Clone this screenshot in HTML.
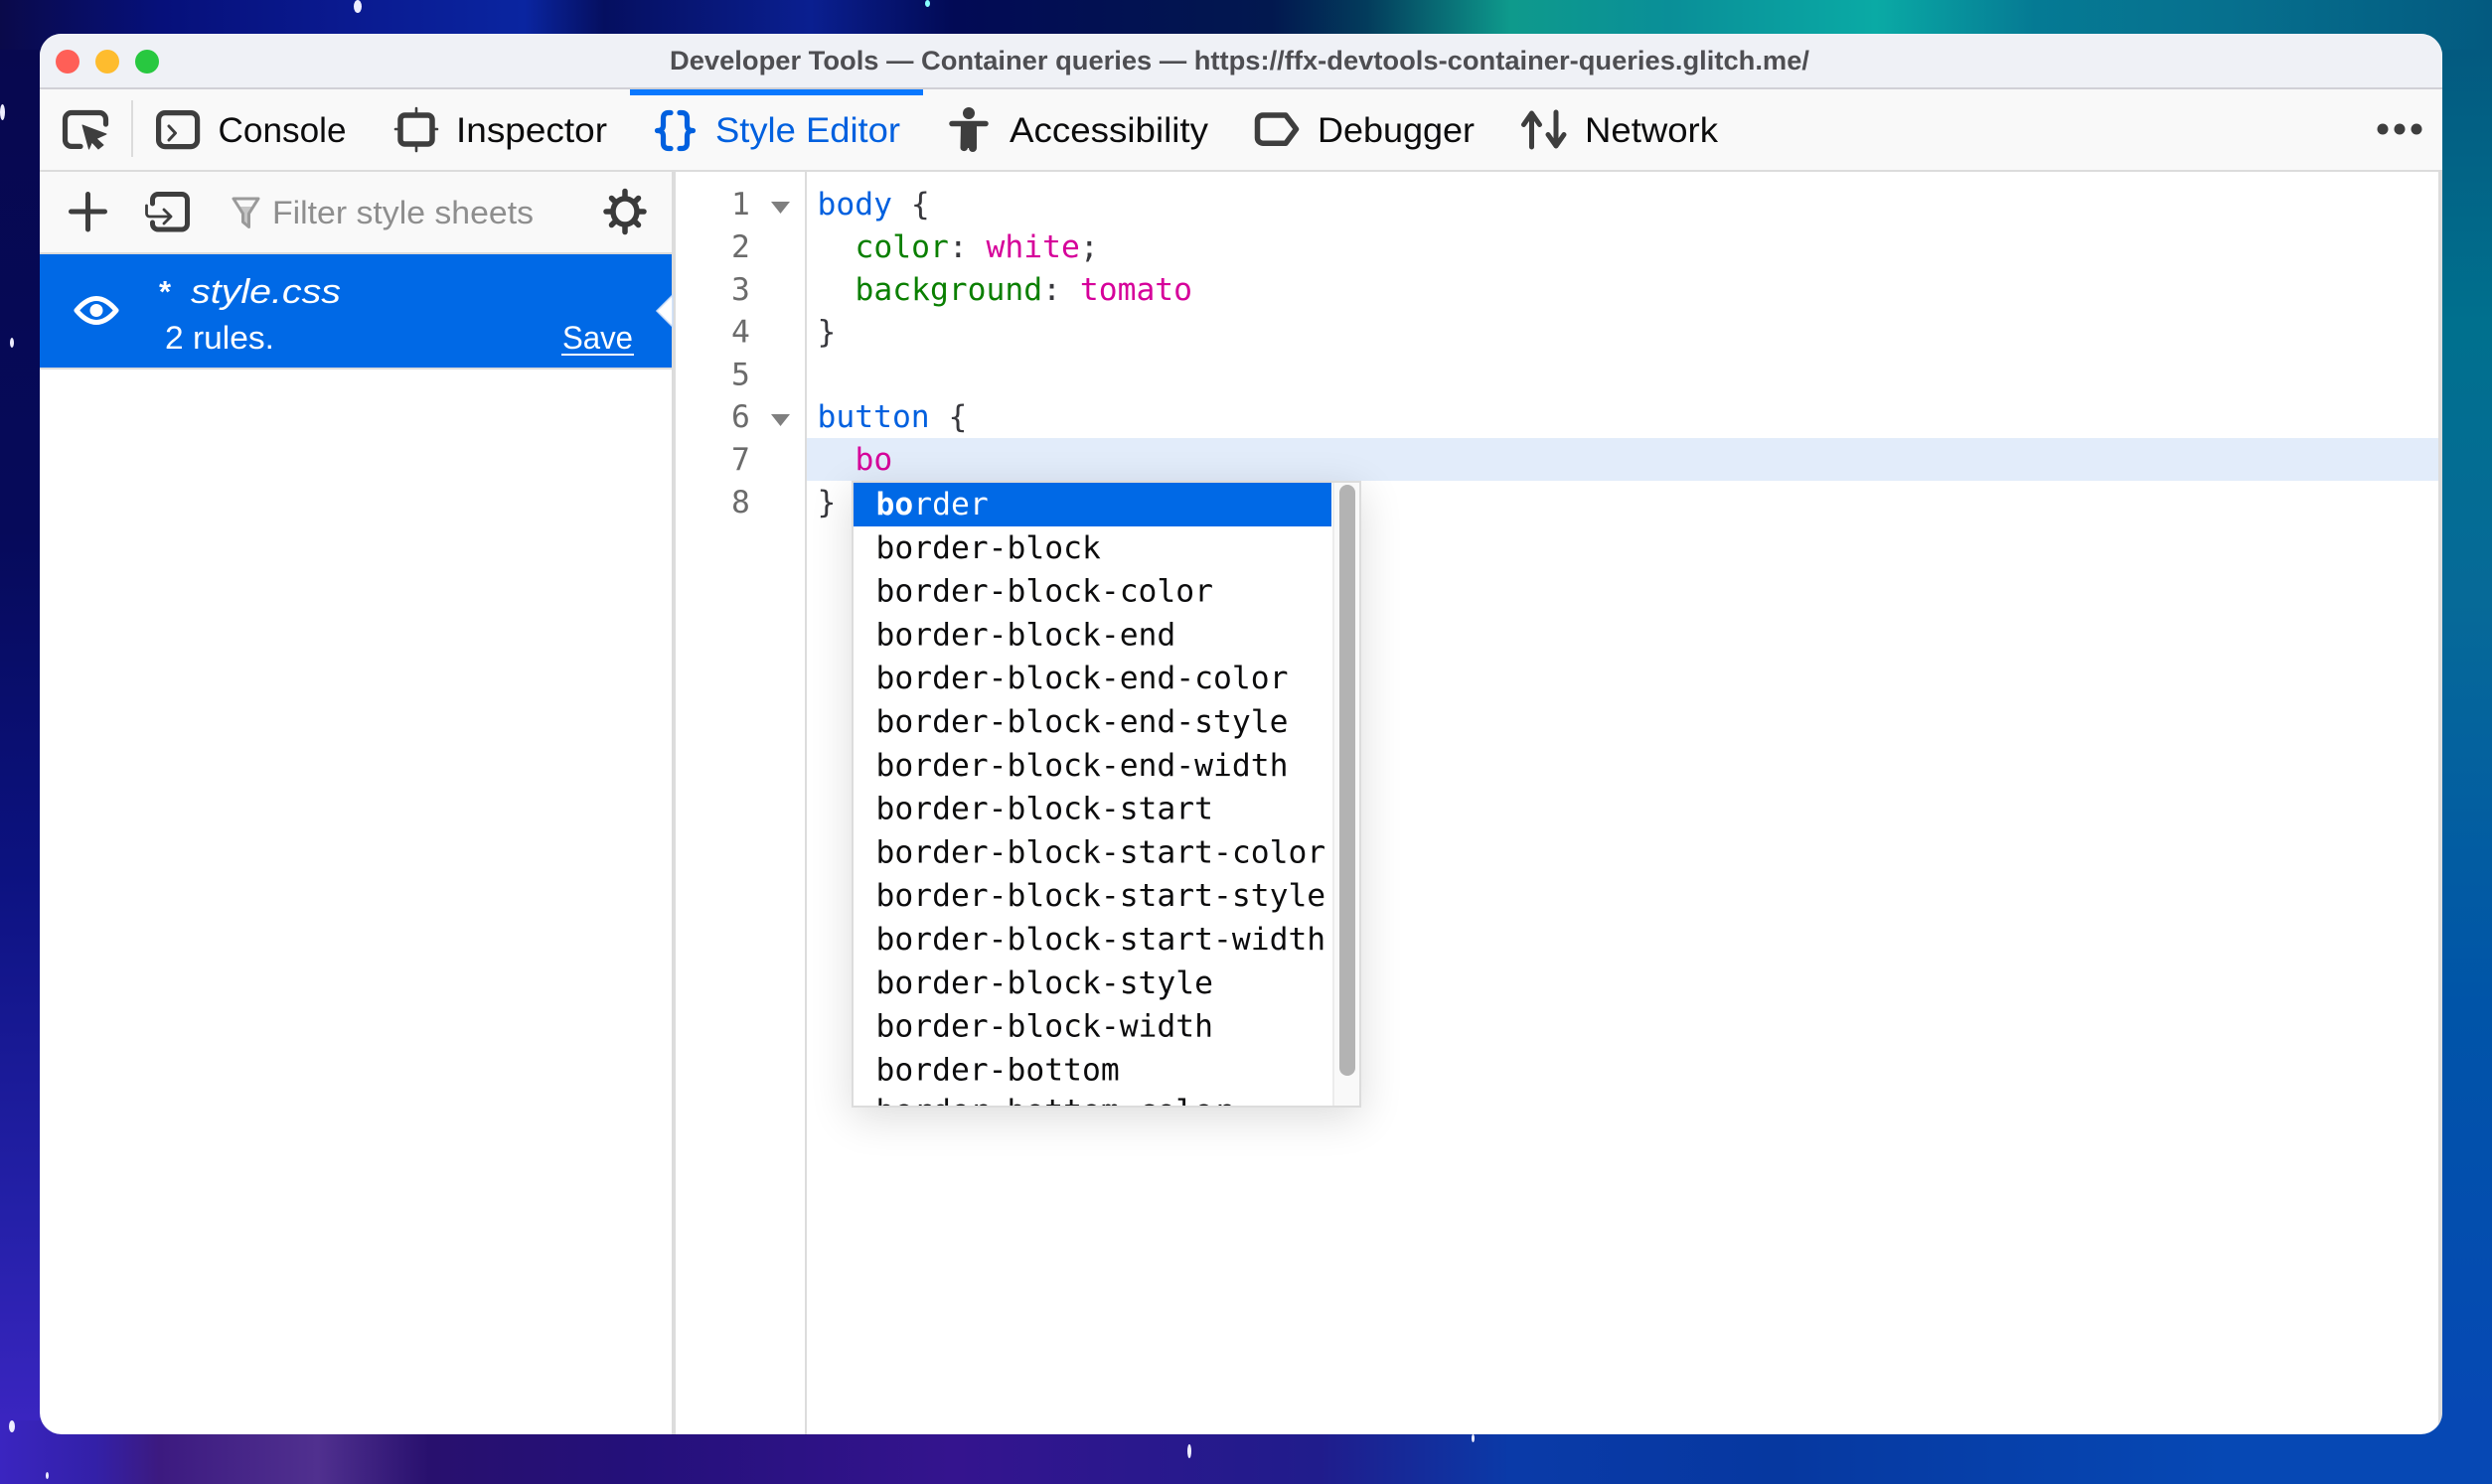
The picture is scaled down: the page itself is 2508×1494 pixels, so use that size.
<!DOCTYPE html>
<html lang="en">
<head>
<meta charset="utf-8">
<title>Developer Tools — Container queries</title>
<style>
html,body{margin:0;padding:0;width:2508px;height:1494px;overflow:hidden;background:#071a70}
.abs{position:absolute}
#tb{left:0;top:0;width:2508px;height:60px;background:linear-gradient(90deg,#0a0a4a 0,#06107a 160px,#0a1a90 352px,#0a25a0 528px,#050f60 608px,#0a1f90 816px,#020a55 960px,#02184f 1280px,#033c5c 1376px,#0e9a8c 1520px,#0a8f98 1680px,#0aaaa5 1888px,#057a94 2048px,#06708e 2240px,#035a80 2508px)}
#bb{left:0;top:1420px;width:2508px;height:74px;background:linear-gradient(90deg,#3a25c0 0,#3320a8 96px,#3c1a80 160px,#50308f 320px,#28106e 432px,#24107a 640px,#34148e 960px,#201c8c 1328px,#0a3aa8 1520px,#0638a0 1792px,#0648b4 2240px,#0648b4 2508px)}
#lb{left:0;top:50px;width:40px;height:1380px;background:linear-gradient(180deg,#07084f 0,#060a5a 35%,#0c1280 60%,#2420a8 85%,#3a25c0 100%)}
#rb{left:2458px;top:50px;width:50px;height:1380px;background:linear-gradient(180deg,#035a80 0,#00708e 20%,#066a98 40%,#0054a8 70%,#0648b4 100%)}
.star{position:absolute;background:#eef;border-radius:50%}
#win{left:40px;top:34px;width:2418px;height:1410px;border-radius:22px;overflow:hidden;background:#fff}
#win div{position:absolute}
#pop{left:857px;top:484px;width:513px;height:631px;background:#fff;box-shadow:0 10px 40px rgba(0,0,0,.14);overflow:hidden;box-sizing:border-box;border:2px solid #dcdcdc}
#pop div{position:absolute}
svg text{white-space:pre}
.ui{font-family:"Liberation Sans",sans-serif}
.mono{font-family:"DejaVu Sans Mono","Liberation Mono",monospace;font-size:31.33px}
</style>
</head>
<body>
<div class="abs" id="tb"></div>
<div class="abs" id="bb"></div>
<div class="abs" id="lb"></div>
<div class="abs" id="rb"></div>
<div class="star" style="left:356px;top:0;width:8px;height:13px"></div>
<div class="star" style="left:931px;top:0;width:5px;height:7px;background:#8ff"></div>
<div class="star" style="left:0;top:105px;width:5px;height:16px"></div>
<div class="star" style="left:10px;top:340px;width:4px;height:10px"></div>
<div class="star" style="left:9px;top:1430px;width:6px;height:12px"></div>
<div class="star" style="left:46px;top:1482px;width:3px;height:7px"></div>
<div class="star" style="left:1195px;top:1454px;width:4px;height:14px"></div>
<div class="star" style="left:1481px;top:1444px;width:3px;height:8px"></div>

<div class="abs" id="win">
  <div style="left:0;top:0;width:2418px;height:54px;background:#eff1f6"></div>
  <div style="left:0;top:54px;width:2418px;height:2px;background:#d0d0d6"></div>
  <div style="left:0;top:56px;width:2418px;height:81px;background:#f9f9f9"></div>
  <div style="left:594px;top:56px;width:295px;height:6px;background:#0a78ff"></div>
  <div style="left:0;top:137px;width:2418px;height:2px;background:#dcdcdc"></div>
  <div style="left:92px;top:67px;width:2px;height:57px;background:#dcdcdc"></div>
  <div style="left:0;top:139px;width:636px;height:81px;background:#f9f9f9"></div>
  <div style="left:0;top:220px;width:636px;height:2px;background:#dcdcdc"></div>
  <div style="left:0;top:222px;width:636px;height:114px;background:#0069e6"></div>
  <div style="left:0;top:336px;width:636px;height:2px;background:#dcdcdc"></div>
  <div style="left:636px;top:139px;width:4px;height:1271px;background:#dcdcdc"></div>
  <div style="left:770px;top:139px;width:2px;height:1271px;background:#dcdcdc"></div>
  <div style="left:772px;top:407px;width:1642px;height:43px;background:#e2ecfa"></div>
  <div style="left:2414px;top:139px;width:4px;height:1271px;background:#dcdcdc"></div>
</div>

<svg class="abs" style="left:0;top:0" width="2508" height="1494" viewBox="0 0 2508 1494">
  <!-- traffic lights -->
  <circle cx="68" cy="62" r="12" fill="#ff5f57"/>
  <circle cx="108" cy="62" r="12" fill="#febc2e"/>
  <circle cx="148" cy="62" r="12" fill="#28c840"/>
  <text class="ui" x="674" y="70" font-size="26.500" font-weight="700" fill="#4e4e52" textLength="1147" lengthAdjust="spacingAndGlyphs">Developer Tools — Container queries — https://ffx-devtools-container-queries.glitch.me/</text>

  <!-- toolbar icons -->
  <g fill="none" stroke="#3e3e3e" stroke-width="5.2" stroke-linecap="round" stroke-linejoin="round">
    <path d="M81 147.4H72a6.5 6.5 0 0 1-6.5-6.5V120a6.5 6.5 0 0 1 6.5-6.5h28a6.5 6.5 0 0 1 6.5 6.5v5"/>
    <rect x="159.6" y="113.6" width="39" height="34" rx="6.5"/>
    <path d="M170 127l6.5 7-6.5 7" stroke-width="3"/>
    <rect x="403" y="116" width="32" height="29" rx="4.5" stroke-width="5.5"/>
    <path d="M419 109v5M419 146v6M398 130h5M435 130h5" stroke-width="2.6"/>
    <path d="M675 113.5h-2q-5.5 0-5.500 5.500v7q0 5.500-6 5.500q6 0 6 5.500v7q0 5.500 5.500 5.500h2" stroke="#0060df"/>
    <path d="M684 113.500h2q5.500 0 5.500 5.500v7q0 5.500 6 5.500q-6 0-6 5.500v7q0 5.500-5.500 5.500h-2" stroke="#0060df"/>
    <path d="M1271 116H1294L1304.500 130 1294 144.200H1271a5.500 5.500 0 0 1-5.500-5.500V121.500a5.500 5.500 0 0 1 5.500-5.500Z" stroke-width="5.500"/>
    <path d="M1541.500 114V148M1533.500 125.500L1541.500 114 1549.500 125.500M1566 113V147M1558 135.500L1566 147 1574 135.500" stroke-width="5"/>
    <path d="M71.500 213H105.500M88.500 195.500V231" stroke-width="5"/>
    <path d="M153.500 205V201a5.500 5.500 0 0 1 5.500-5.500h24a5.500 5.500 0 0 1 5.500 5.500v24.500a5.500 5.500 0 0 1-5.500 5.500h-24a5.500 5.500 0 0 1-5.500-5.500V224" stroke-width="5"/>
    <path d="M147.500 207V215a3 3 0 0 0 3 3H172M165 211L172 218 165 225" stroke-width="2.800"/>
  </g>
  <polygon points="83,126 107,135 97,139.500 104,146 99,150 92.500,143 89.500,150" fill="#3e3e3e" stroke="#3e3e3e" stroke-width="1" stroke-linejoin="round"/>
  <!-- accessibility -->
  <circle cx="975" cy="114" r="6" fill="#3e3e3e"/>
  <path d="M958 124.500H992" stroke="#3e3e3e" stroke-width="5.500" stroke-linecap="round"/>
  <path d="M967 124H983V149a4 4 0 0 1-8 0V140H975V149a4 4 0 0 1-1 0H974V140V149a3.800 3.800 0 0 1-7.500 0Z" fill="#3e3e3e"/>
  <!-- filter icon -->
  <path d="M241 208H255L250.500 215V229L245 224V215Z" fill="#c6c6c6"/>
  <path d="M235 200H260L250.500 215V228.500L244.500 223.500V215Z" fill="none" stroke="#9a9a9a" stroke-width="3" stroke-linejoin="round"/>
  <!-- gear -->
  <g fill="none" stroke="#3a3a3a" stroke-linecap="round">
    <ellipse cx="629" cy="213" rx="12" ry="13" stroke-width="5.500"/>
    <path stroke-width="5.500" d="M629 192.500V199M629 227V233.500M610 213H616M642 213H648M615.500 199.500L619 203M639 223L642.500 226.500M615.500 226.500L619 223M639 203L642.500 199.500"/>
  </g>
  <!-- eye -->
  <path d="M77 312.500Q97 288.500 117 312.500Q97 336.500 77 312.500Z" fill="none" stroke="#fff" stroke-width="5" stroke-linejoin="round"/>
  <circle cx="97" cy="312.500" r="6.500" fill="#fff"/>
  <!-- notch -->
  <polygon points="677,297 661,313 677,329" fill="#fff" stroke="#c9dcf5" stroke-width="1.500"/>
  <!-- dots -->
  <circle cx="2398" cy="130" r="5.500" fill="#3e3e3e"/>
  <circle cx="2415" cy="130" r="5.500" fill="#3e3e3e"/>
  <circle cx="2432" cy="130" r="5.500" fill="#3e3e3e"/>

  <!-- toolbar labels -->
  <g class="ui" font-size="35" fill="#0c0c0d">
    <text x="219.500" y="143" textLength="129" lengthAdjust="spacingAndGlyphs">Console</text>
    <text x="459" y="143" textLength="152" lengthAdjust="spacingAndGlyphs">Inspector</text>
    <text x="720" y="143" textLength="186" fill="#0060df" lengthAdjust="spacingAndGlyphs">Style Editor</text>
    <text x="1016" y="143" textLength="200" lengthAdjust="spacingAndGlyphs">Accessibility</text>
    <text x="1326" y="143" textLength="158" lengthAdjust="spacingAndGlyphs">Debugger</text>
    <text x="1595" y="143" textLength="134" lengthAdjust="spacingAndGlyphs">Network</text>
  </g>
  <text class="ui" x="274" y="225" font-size="32" fill="#8e8e8e" textLength="263" lengthAdjust="spacingAndGlyphs">Filter style sheets</text>
  <g class="ui" fill="#fff">
    <text x="160" y="304" font-size="31" font-weight="700">*</text>
    <text x="192" y="305" font-size="34" font-style="italic" textLength="151" lengthAdjust="spacingAndGlyphs">style.css</text>
    <text x="166" y="351" font-size="32" textLength="110" lengthAdjust="spacingAndGlyphs">2 rules.</text>
    <text x="566" y="351" font-size="32" textLength="71" lengthAdjust="spacingAndGlyphs">Save</text>
  </g>
  <rect x="565" y="356" width="73" height="2" fill="#fff"/>

  <!-- gutter -->
  <g class="mono" fill="#6b6b6b">
    <text x="736" y="216.200">1</text>
    <text x="736" y="259">2</text>
    <text x="736" y="301.800">3</text>
    <text x="736" y="344.600">4</text>
    <text x="736" y="387.400">5</text>
    <text x="736" y="430.200">6</text>
    <text x="736" y="473">7</text>
    <text x="736" y="515.800">8</text>
  </g>
  <polygon points="776,203 795,203 785.500,215" fill="#7f7f7f"/>
  <polygon points="776,417 795,417 785.500,429" fill="#7f7f7f"/>

  <!-- code -->
  <g class="mono">
    <text x="822.500" y="216.200" fill="#0060df">body<tspan fill="#38383d"> {</tspan></text>
    <text x="860.500" y="259" fill="#0a7f00">color<tspan fill="#38383d">: </tspan><tspan fill="#d6009a">white</tspan><tspan fill="#38383d">;</tspan></text>
    <text x="860.500" y="301.800" fill="#0a7f00">background<tspan fill="#38383d">: </tspan><tspan fill="#d6009a">tomato</tspan></text>
    <text x="822.500" y="344.600" fill="#38383d">}</text>
    <text x="822.500" y="430.200" fill="#0060df">button<tspan fill="#38383d"> {</tspan></text>
    <text x="860.500" y="473" fill="#d6009a">bo</text>
    <text x="822.500" y="515.800" fill="#38383d">}</text>
  </g>
</svg>

<div class="abs" id="pop">
  <div style="left:0;top:0;width:481px;height:44px;background:#0069e6"></div>
  <div style="left:482px;top:0;width:2px;height:627px;background:#ececec"></div>
  <div style="left:484px;top:0;width:25px;height:627px;background:#f9f9f9"></div>
  <div style="left:489px;top:2px;width:16px;height:595px;background:#b3b3b3;border-radius:8px"></div>
  <svg class="abs" style="left:0;top:0" width="482" height="627" viewBox="859 486 482 627">
    <g class="mono" fill="#0c0c0d">
      <text x="881.500" y="518" fill="#fff"><tspan font-weight="700">bo</tspan>rder</text>
      <text x="881.500" y="561.800">border-block</text>
      <text x="881.500" y="605.600">border-block-color</text>
      <text x="881.500" y="649.400">border-block-end</text>
      <text x="881.500" y="693.200">border-block-end-color</text>
      <text x="881.500" y="737">border-block-end-style</text>
      <text x="881.500" y="780.800">border-block-end-width</text>
      <text x="881.500" y="824.600">border-block-start</text>
      <text x="881.500" y="868.400">border-block-start-color</text>
      <text x="881.500" y="912.200">border-block-start-style</text>
      <text x="881.500" y="956">border-block-start-width</text>
      <text x="881.500" y="999.800">border-block-style</text>
      <text x="881.500" y="1043.600">border-block-width</text>
      <text x="881.500" y="1087.400">border-bottom</text>
      <text x="881.500" y="1129">border-bottom-color</text>
    </g>
  </svg>
</div>
</body>
</html>
